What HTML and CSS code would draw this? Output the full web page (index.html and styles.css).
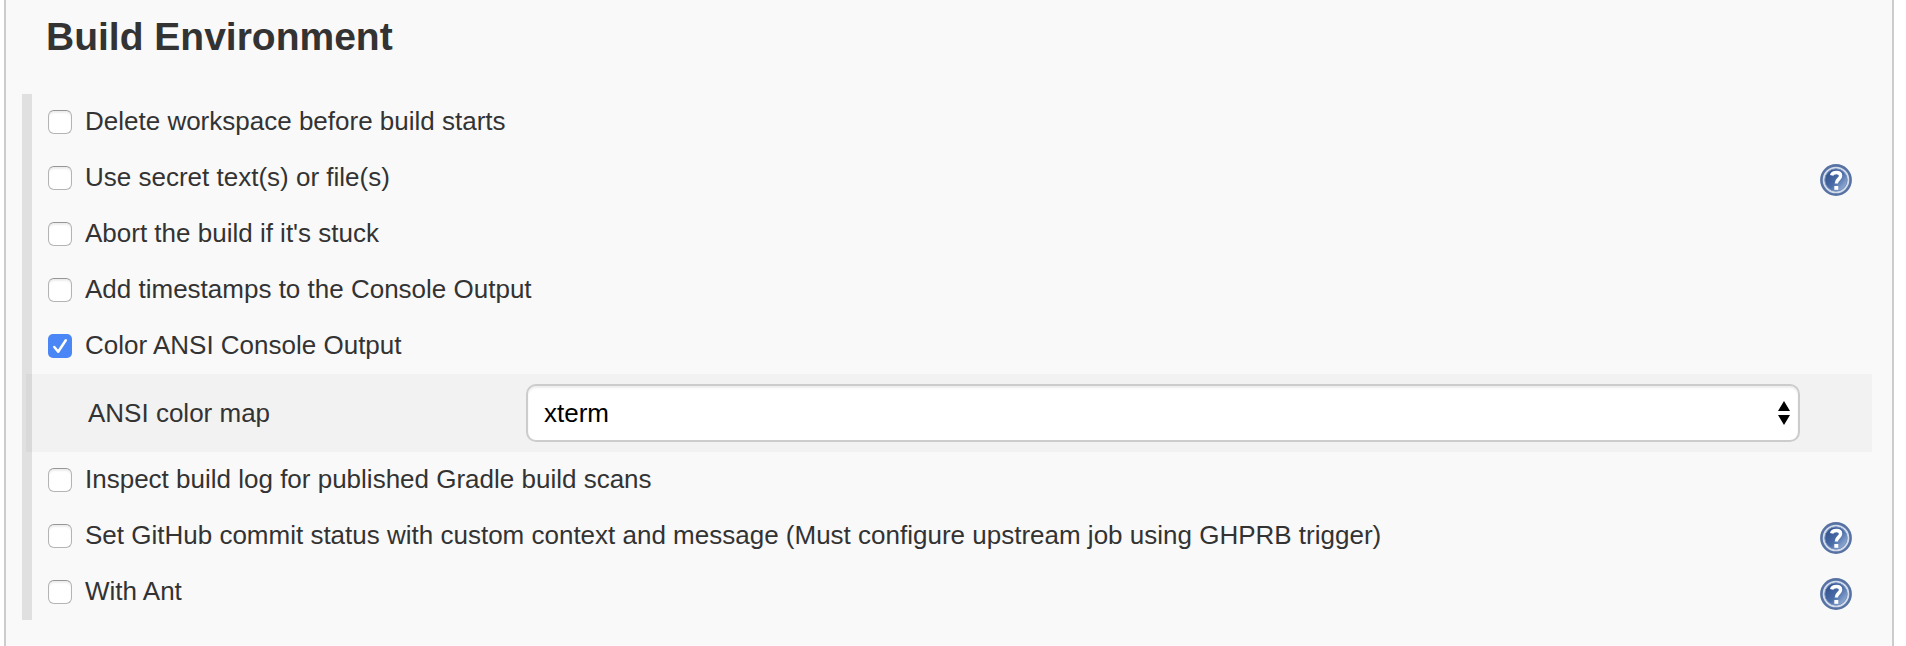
FILE: index.html
```html
<!DOCTYPE html>
<html lang="en">
<head>
<meta charset="utf-8">
<title>Build Environment</title>
<link rel="stylesheet" href="styles.css">
</head>
<body>
<svg width="0" height="0" class="defs" aria-hidden="true">
  <defs>
    <linearGradient id="blue" x1="0.1" y1="0.2" x2="0.9" y2="0.9">
      <stop offset="0" stop-color="#34548f"/><stop offset="0.5" stop-color="#4a6ca8"/><stop offset="1" stop-color="#9ab2d8"/>
    </linearGradient>
    <symbol id="help" viewBox="0 0 32 32">
      <circle cx="16" cy="16" r="14.6" fill="#d3ddec" stroke="#5873a3" stroke-width="2.6"/>
      <circle cx="16" cy="16" r="11.2" fill="url(#blue)" stroke="#7590bd" stroke-width="1"/>
      <path d="M11.6 11.4C12.6 7.6 20.6 7.2 20.6 11.8C20.6 15.2 16.3 15.2 16.3 19.6" fill="none" stroke="#fff" stroke-width="3.4"/>
      <path d="M14.3 22h4v3.8h-4z" fill="#fff"/>
    </symbol>
  </defs>
</svg>
<main class="panel">
  <h1 class="title">Build Environment</h1>
  <section class="options">
    <label class="row"><input class="check" type="checkbox"><span class="text">Delete workspace before build starts</span></label>
    <label class="row"><input class="check" type="checkbox"><span class="text">Use secret text(s) or file(s)</span><svg class="help"><use href="#help"/></svg></label>
    <label class="row"><input class="check" type="checkbox"><span class="text">Abort the build if it's stuck</span></label>
    <label class="row"><input class="check" type="checkbox"><span class="text">Add timestamps to the Console Output</span></label>
    <label class="row"><span class="checked"><svg viewBox="0 0 24 24"><path d="M6.3 13L10.2 17.7L17.8 6.3" fill="none" stroke="#fff" stroke-width="2.5" stroke-linecap="round" stroke-linejoin="round"/></svg></span><span class="text">Color ANSI Console Output</span></label>
    <div class="nested">
      <span class="name">ANSI color map</span>
      <div class="select"><span>xterm</span><svg class="arrows" viewBox="0 0 12 24"><path d="M0 10L6 0L12 10zM0 14H12L6 24z"/></svg></div>
    </div>
    <label class="row"><input class="check" type="checkbox"><span class="text">Inspect build log for published Gradle build scans</span></label>
    <label class="row"><input class="check" type="checkbox"><span class="text">Set GitHub commit status with custom context and message (Must configure upstream job using GHPRB trigger)</span><svg class="help"><use href="#help"/></svg></label>
    <label class="row"><input class="check" type="checkbox"><span class="text">With Ant</span><svg class="help"><use href="#help"/></svg></label>
  </section>
</main>
</body>
</html>
```
FILE: styles.css
```css
* { box-sizing: border-box; }
body {
  margin: 0;
  height: 646px;
  overflow: hidden;
  background: #fff;
  color: #333;
  font: 26px/30px "Liberation Sans", Arial, sans-serif;
}
.defs { position: absolute; }
.panel {
  height: 646px;
  margin: 0 12px 0 4px;
  padding: 0 20px 0 16px;
  border: solid #ccc;
  border-width: 0 2px;
  background: #f9f9f9;
}
.title {
  height: 94px;
  margin: 0;
  padding: 15px 0 0 24px;
  font-size: 39px;
  line-height: 44px;
}
.options {
  height: 526px;
  border-left: 10px solid #e0e0e0;
}
.row {
  display: flex;
  align-items: center;
  height: 56px;
  padding: 0 20px 0 16px;
  gap: 13px;
  white-space: nowrap;
}
.text { padding-bottom: 2px; }
.check {
  appearance: none;
  flex: none;
  width: 24px;
  height: 24px;
  margin: 0;
  border: 1px solid #b4b4b4;
  border-top-color: #969696;
  border-radius: 6px;
  background: #fff;
  box-shadow: inset 0 2px 2px #eee;
}
.checked {
  flex: none;
  width: 24px;
  height: 24px;
  border-radius: 5px;
  background: #4a86f5;
}
.checked svg { display: block; }
.help {
  flex: none;
  width: 32px;
  height: 32px;
  margin: 4px 0 0 auto;
}
.nested {
  display: flex;
  height: 78px;
  margin-left: -6px;
  padding: 10px 72px 10px 62px;
  background: rgba(0, 0, 0, 0.027);
}
.name {
  width: 438px;
  padding-top: 14px;
}
.select {
  display: flex;
  flex: 1;
  align-items: center;
  justify-content: space-between;
  padding: 0 8px 0 16px;
  border: 2px solid #ccc;
  border-radius: 10px;
  background: #fff;
  box-shadow: inset 0 2px 2px #eee;
  color: #000;
}
.arrows {
  width: 12px;
  height: 24px;
}
```
